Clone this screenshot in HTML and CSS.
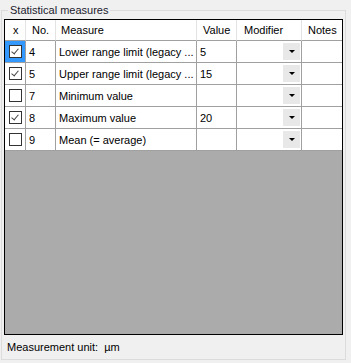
FILE: index.html
```html
<!DOCTYPE html>
<html lang="en">
<head>
  <meta charset="UTF-8" />
  <title>Statistical measures</title>
  <link rel="stylesheet" href="styles.css">
</head>
<body>
  <fieldset class="group">
    <legend>Statistical measures</legend>

    <div class="grid">
      <div class="row head">
        <div class="cell c-x">x</div>
        <div class="cell c-no">No.</div>
        <div class="cell c-measure">Measure</div>
        <div class="cell c-value">Value</div>
        <div class="cell c-mod">Modifier</div>
        <div class="cell c-notes">Notes</div>
      </div>

      <div class="row">
        <div class="cell c-x selected"><span class="check on"></span></div>
        <div class="cell c-no">4</div>
        <div class="cell c-measure">Lower range limit (legacy ...</div>
        <div class="cell c-value">5</div>
        <div class="cell c-mod"><span class="drop"></span></div>
        <div class="cell c-notes"></div>
      </div>
      <div class="row">
        <div class="cell c-x"><span class="check on"></span></div>
        <div class="cell c-no">5</div>
        <div class="cell c-measure">Upper range limit (legacy ...</div>
        <div class="cell c-value">15</div>
        <div class="cell c-mod"><span class="drop"></span></div>
        <div class="cell c-notes"></div>
      </div>
      <div class="row">
        <div class="cell c-x"><span class="check"></span></div>
        <div class="cell c-no">7</div>
        <div class="cell c-measure">Minimum value</div>
        <div class="cell c-value"></div>
        <div class="cell c-mod"><span class="drop"></span></div>
        <div class="cell c-notes"></div>
      </div>
      <div class="row">
        <div class="cell c-x"><span class="check on"></span></div>
        <div class="cell c-no">8</div>
        <div class="cell c-measure">Maximum value</div>
        <div class="cell c-value">20</div>
        <div class="cell c-mod"><span class="drop"></span></div>
        <div class="cell c-notes"></div>
      </div>
      <div class="row">
        <div class="cell c-x"><span class="check"></span></div>
        <div class="cell c-no">9</div>
        <div class="cell c-measure">Mean (= average)</div>
        <div class="cell c-value"></div>
        <div class="cell c-mod"><span class="drop"></span></div>
        <div class="cell c-notes"></div>
      </div>
    </div>

    <p class="unit">Measurement unit:&nbsp; µm</p>
  </fieldset>
</body>
</html>
```

FILE: styles.css
```css
html, body {
  margin: 0;
  background: #f0f0f0;
}
body {
  padding: 3px 5px 0 1px;
  font-family: 'Liberation Sans', Arial, sans-serif;
  font-size: 11px;
  color: #000;
}
.group {
  margin: 0;
  padding: 2px 2px 0 2px;
  border: 1px solid #dcdcdc;
  height: 357px;
  box-sizing: border-box;
}
.group legend {
  padding: 0 2px;
  margin-left: 4px;
  line-height: 14px;
  color: #1a1a2e;
}
.grid {
  border: 1px solid #000;
  background: #ababab;
  height: 316px;
  box-sizing: border-box;
  width: 339px;
}
.row {
  display: grid;
  grid-template-columns: 21px 30px 141px 40px 65px 40px;
  height: 22px;
  background: #fff;
}
.row.head {
  height: 21px;
}
.cell {
  box-sizing: border-box;
  border-right: 1px solid #a0a0a0;
  border-bottom: 1px solid #a0a0a0;
  padding-left: 3px;
  display: flex;
  align-items: center;
  white-space: nowrap;
  overflow: hidden;
}
.c-notes { border-right: none; }
.c-x {
  padding-left: 0;
  justify-content: center;
}
.selected { background: #3399ff; }
.check {
  width: 13px;
  height: 13px;
  box-sizing: border-box;
  border: 1px solid #333;
  background: #fff;
  position: relative;
}
.check.on::after {
  content: "";
  position: absolute;
  left: 3px;
  top: 1px;
  width: 3px;
  height: 6px;
  border: solid #444;
  border-width: 0 1px 1px 0;
  transform: rotate(40deg);
}
.c-mod {
  justify-content: flex-end;
  padding: 0 1px 0 0;
}
.head .cell {
  border-right-color: #e3e3e3;
  padding-left: 6px;
  justify-content: flex-start;
}
.head .c-x { padding-left: 8px; }
.head .c-measure { padding-left: 5px; }
.head .c-mod { padding-left: 7px; }
.drop {
  width: 17px;
  height: 17px;
  background: #e8e8e8;
  position: relative;
}
.drop::after {
  content: "";
  position: absolute;
  left: 6px;
  top: 7px;
  border-left: 3px solid transparent;
  border-right: 3px solid transparent;
  border-top: 3px solid #000;
}
.unit {
  margin: 0;
  padding: 5px 0 0 3px;
  line-height: 14px;
}
```
